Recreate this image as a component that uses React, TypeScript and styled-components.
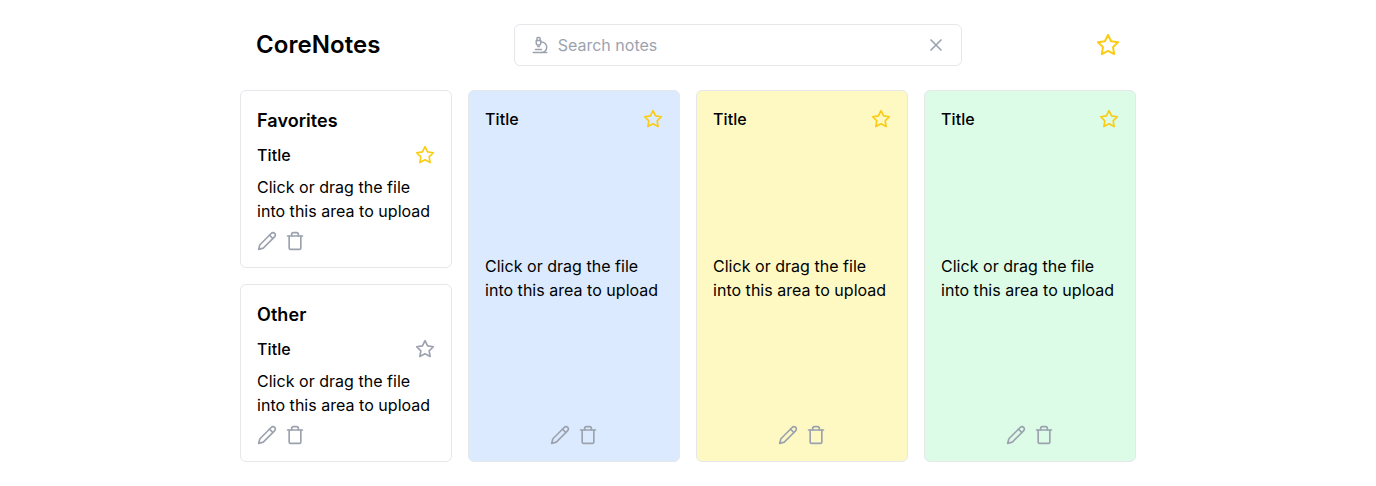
import React from "react";
import styled, { createGlobalStyle } from "styled-components";
import { Microscope, X } from "lucide-react";

const GlobalStyle = createGlobalStyle`
  *, *::before, *::after { box-sizing: border-box; }
  body { margin: 0; background: #fff; color: #000; font: 400 16px/24px Inter, sans-serif; }
  h1, h2, h3, p { margin: 0; }
  svg { display: block; flex-shrink: 0; }
`;

const Page = styled.div`
  max-width: 896px;
  margin: 0 auto;
`;

const Header = styled.header`
  display: flex;
  align-items: center;
  justify-content: space-between;
  padding: 24px 16px;
`;

const Brand = styled.h1`
  font-size: 24px;
  line-height: 32px;
  font-weight: 600;
  letter-spacing: 0.06px;
`;

const SearchBox = styled.label`
  display: flex;
  align-items: center;
  gap: 8.5px;
  width: 448px;
  height: 42px;
  padding: 0 15px 0 16px;
  border: 1px solid #e5e7eb;
  border-radius: 6px;
  color: #9ca3af;
`;

const SearchInput = styled.input`
  flex: 1;
  min-width: 0;
  padding: 0;
  border: 0;
  outline: 0;
  background: transparent;
  font: inherit;
  color: #000;
  &::placeholder { color: #9ca3af; opacity: 1; }
`;

const Board = styled.main`
  display: grid;
  grid-template-columns: repeat(4, 1fr);
  gap: 16px;
`;

const Sidebar = styled.div`
  display: flex;
  flex-direction: column;
  gap: 16px;
`;

const Card = styled.section<{ $bg?: string }>`
  display: flex;
  flex-direction: column;
  justify-content: space-between;
  gap: 8px;
  padding: 16px;
  border: 1px solid #e5e7eb;
  border-radius: 6px;
  background: ${(p) => p.$bg ?? "#fff"};
  letter-spacing: 0.025px;
`;

const GroupTitle = styled.h2`
  font-size: 18px;
  line-height: 28px;
  font-weight: 600;
  letter-spacing: 0.06px;
`;

const TitleRow = styled.div`
  display: flex;
  align-items: center;
  justify-content: space-between;
`;

const NoteTitle = styled.h3`
  font-size: 16px;
  line-height: 24px;
  font-weight: 500;
  letter-spacing: 0.08px;
`;

const Actions = styled.div<{ $centered?: boolean }>`
  display: flex;
  justify-content: ${(p) => (p.$centered ? "center" : "flex-start")};
  gap: 8px;
  color: #9ca3af;
`;

const LineIcon = styled.svg`
  fill: none;
  stroke: currentColor;
  stroke-width: 2;
  stroke-linecap: round;
  stroke-linejoin: round;
`;

const StarIcon = styled(LineIcon)<{ $active: boolean }>`
  color: ${(p) => (p.$active ? "#facc15" : "#9ca3af")};
`;

function Star({ size = 20, active = true }: { size?: number; active?: boolean }) {
  return (
    <StarIcon $active={active} width={size} height={size} viewBox="0 0 24 24">
      <polygon points="12 2 15.09 8.26 22 9.27 17 14.14 18.18 21.02 12 17.77 5.82 21.02 7 14.14 2 9.27 8.91 8.26 12 2" />
    </StarIcon>
  );
}

function PencilIcon() {
  return (
    <LineIcon width={20} height={20} viewBox="0 0 24 24">
      <path d="M17 3a2.85 2.83 0 1 1 4 4L7.5 20.5 2 22l1.5-5.5Z" />
      <path d="m15 5 4 4" />
    </LineIcon>
  );
}

function TrashIcon() {
  return (
    <LineIcon width={20} height={20} viewBox="0 0 24 24">
      <path d="M3 6h18" />
      <path d="M19 6v14c0 1-1 2-2 2H7c-1 0-2-1-2-2V6" />
      <path d="M8 6V4c0-1 1-2 2-2h4c1 0 2 1 2 2v2" />
    </LineIcon>
  );
}

function Note({ group, bg, active = true }: { group?: string; bg?: string; active?: boolean }) {
  return (
    <Card $bg={bg}>
      {group && <GroupTitle>{group}</GroupTitle>}
      <TitleRow>
        <NoteTitle>Title</NoteTitle>
        <Star active={active} />
      </TitleRow>
      <p>Click or drag the file into this area to upload</p>
      <Actions $centered={!group}>
        <PencilIcon />
        <TrashIcon />
      </Actions>
    </Card>
  );
}

export default function App() {
  return (
    <Page>
      <GlobalStyle />
      <Header>
        <Brand>CoreNotes</Brand>
        <SearchBox>
          <Microscope size={18} strokeWidth={2} />
          <SearchInput placeholder="Search notes" />
          <X size={20} strokeWidth={2} />
        </SearchBox>
        <Star size={24} />
      </Header>
      <Board>
        <Sidebar>
          <Note group="Favorites" />
          <Note group="Other" active={false} />
        </Sidebar>
        <Note bg="#dbeafe" />
        <Note bg="#fef9c3" />
        <Note bg="#dcfce7" />
      </Board>
    </Page>
  );
}
